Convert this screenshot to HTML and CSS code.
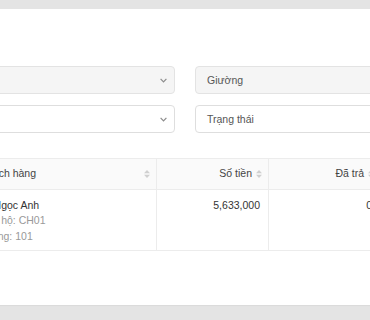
FILE: index.html
```html
<!DOCTYPE html>
<html lang="vi">
<head>
<meta charset="utf-8">
<title>Công nợ</title>
<link rel="stylesheet" href="styles.css">
</head>
<body>
<div class="modal">
  <div class="form-grid">
    <div class="field field-disabled">
      <span class="field-text"></span>
      <svg class="chev" width="7" height="5" viewBox="0 0 7 5"><polyline points="0.6,0.8 3.5,3.8 6.4,0.8" fill="none" stroke="#8c8c8c" stroke-width="1.2"/></svg>
    </div>
    <div class="field field-disabled">
      <span class="field-text">Giường</span>
    </div>
    <div class="field">
      <span class="field-text"></span>
      <svg class="chev" width="7" height="5" viewBox="0 0 7 5"><polyline points="0.6,0.8 3.5,3.8 6.4,0.8" fill="none" stroke="#8c8c8c" stroke-width="1.2"/></svg>
    </div>
    <div class="field">
      <span class="field-text">Trạng thái</span>
    </div>
  </div>

  <table class="data-table">
    <colgroup>
      <col class="col-customer">
      <col class="col-money">
      <col class="col-money">
    </colgroup>
    <thead>
      <tr>
        <th><div class="th-inner th-left"><span>Khách hàng</span><svg class="sorter" width="6" height="8" viewBox="0 0 6 8"><polygon points="3,0 6,3.2 0,3.2" fill="#d0d0d0"/><polygon points="0,4.8 6,4.8 3,8" fill="#d0d0d0"/></svg></div></th>
        <th><div class="th-inner th-right"><span>Số tiền</span><svg class="sorter" width="6" height="8" viewBox="0 0 6 8"><polygon points="3,0 6,3.2 0,3.2" fill="#d0d0d0"/><polygon points="0,4.8 6,4.8 3,8" fill="#d0d0d0"/></svg></div></th>
        <th><div class="th-inner th-right"><span>Đã trả</span><svg class="sorter" width="6" height="8" viewBox="0 0 6 8"><polygon points="3,0 6,3.2 0,3.2" fill="#d0d0d0"/><polygon points="0,4.8 6,4.8 3,8" fill="#d0d0d0"/></svg></div></th>
      </tr>
    </thead>
    <tbody>
      <tr>
        <td>
          <div class="name">Lê Ngọc Anh</div>
          <div class="sub">Căn hộ: CH01</div>
          <div class="sub">Phòng: 101</div>
        </td>
        <td class="num">5,633,000</td>
        <td class="num">0</td>
      </tr>
    </tbody>
  </table>
</div>
</body>
</html>
```
FILE: styles.css
```css
html, body {
  margin: 0;
  padding: 0;
  overflow: hidden;
}
body {
  background: #e4e4e4;
  width: 370px;
  height: 320px;
  font-family: "Liberation Sans", Arial, Helvetica, sans-serif;
  font-size: 10.5px;
  color: #333;
}
.modal {
  margin-top: 9px;
  margin-left: -44px;
  width: 490px;
  height: 296px;
  box-sizing: border-box;
  background: #fff;
  padding: 57px 16px 0 16px;
  box-shadow: 0 1px 1px rgba(0,0,0,0.04);
}
.form-grid {
  display: grid;
  grid-template-columns: 203px 203px;
  column-gap: 20px;
  row-gap: 11px;
}
.field {
  height: 28px;
  box-sizing: border-box;
  border: 1px solid #dedede;
  border-radius: 4px;
  background: #fff;
  display: flex;
  align-items: center;
  justify-content: space-between;
  padding: 0 7px 0 11px;
}
.field-disabled {
  background: #f5f5f5;
  border-color: #e3e3e3;
}
.field-text {
  color: #555;
  line-height: 15px;
}
.chev {
  display: block;
  margin-top: 1px;
}
.data-table {
  margin-top: 25px;
  margin-left: -2px;
  border-collapse: collapse;
  table-layout: fixed;
  width: 410px;
}
.col-customer { width: 186px; }
.col-money { width: 112px; }
.data-table th,
.data-table td {
  border: 1px solid #ececec;
  vertical-align: top;
  white-space: nowrap;
  overflow: hidden;
}
.data-table th {
  background: #fafafa;
  font-weight: normal;
  color: #444;
  line-height: 15px;
  padding: 7px 6px 8px 9px;
}
.data-table td {
  line-height: 15.5px;
  padding: 7.5px 8px 6px 8px;
}
.th-inner {
  display: flex;
  align-items: center;
  gap: 4px;
}
.th-left {
  justify-content: space-between;
}
.th-right {
  justify-content: flex-end;
}
.sorter {
  display: block;
  flex: none;
}
.name {
  color: #333;
}
.sub {
  color: #999;
}
.num {
  text-align: right;
  color: #333;
}
```
